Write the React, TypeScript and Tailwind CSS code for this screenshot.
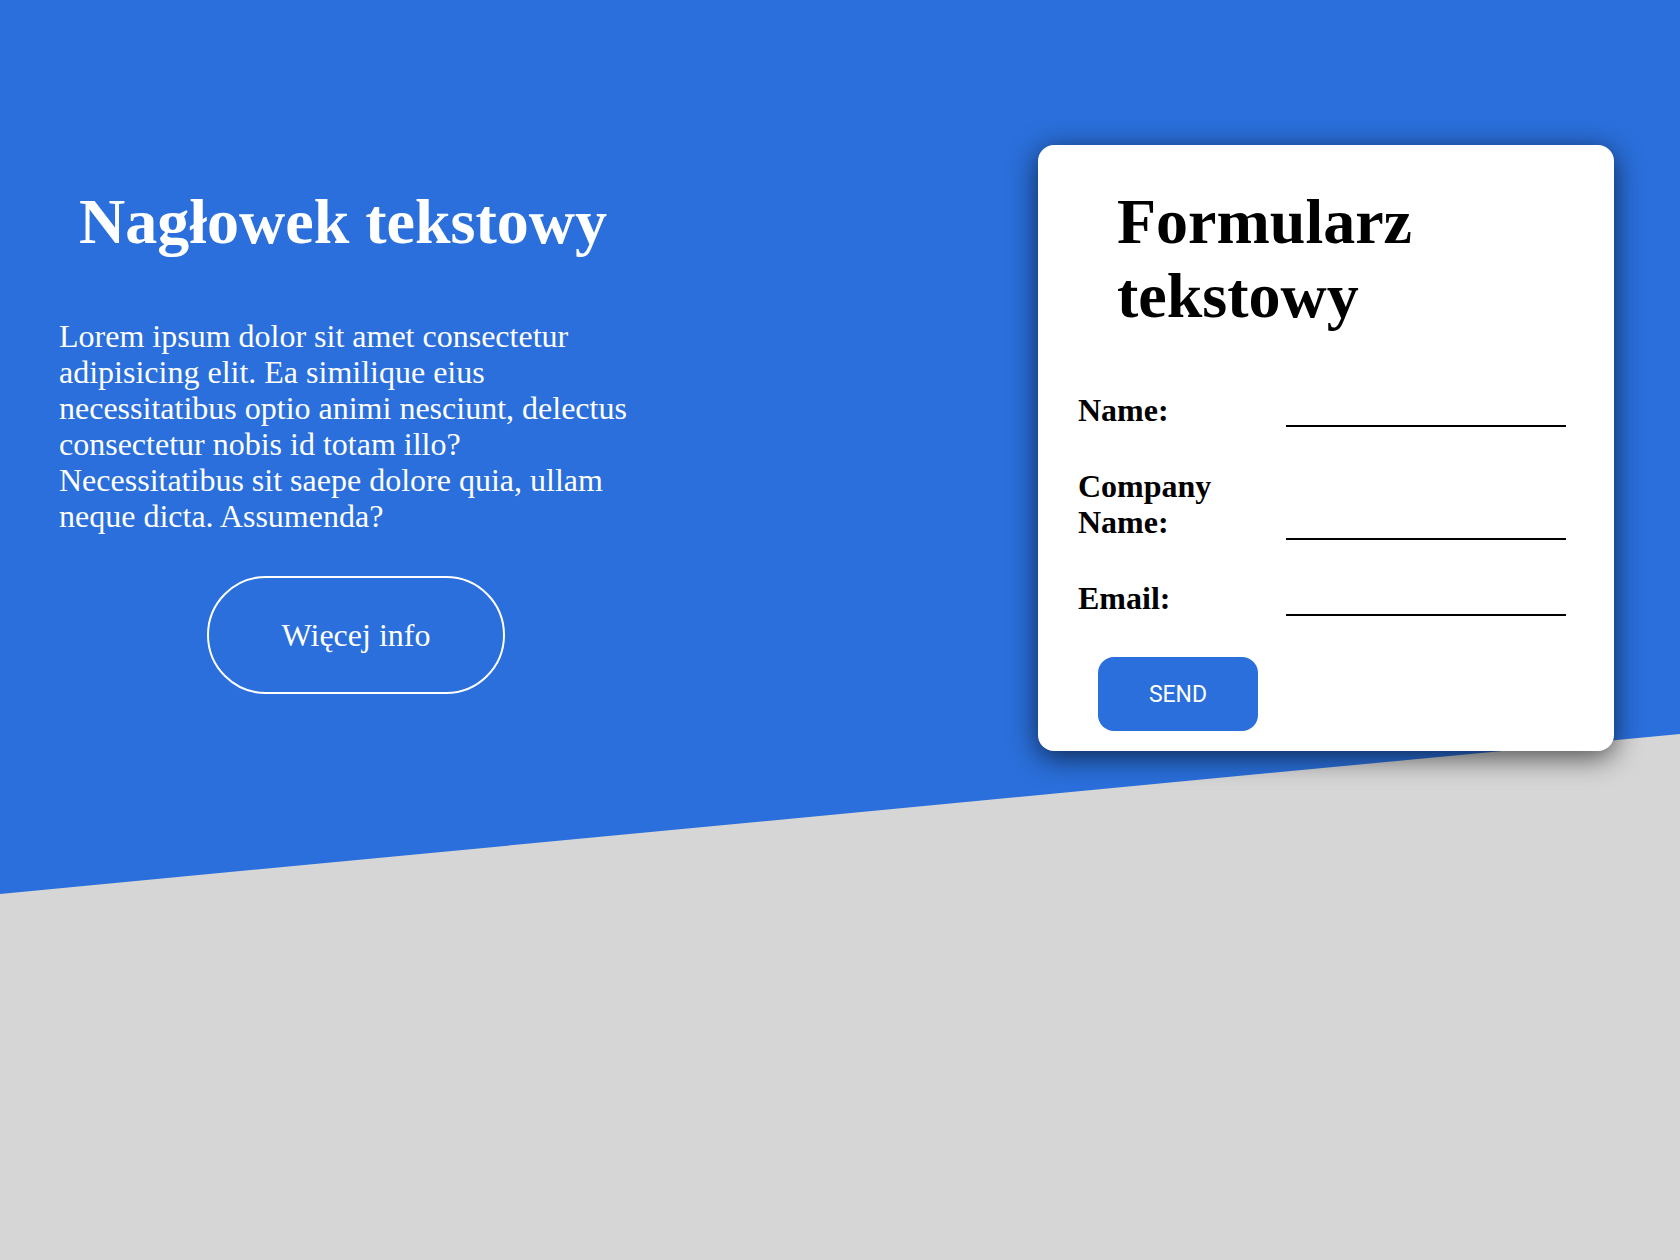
import React from "react";

export default function App() {
  return (
    <div className="relative w-full min-h-[1260px] bg-[#d6d6d6] font-['Liberation_Serif',serif] overflow-hidden">
      <div className="absolute inset-0 bg-[#2a6fdb] [clip-path:polygon(0_0,100%_0,100%_734px,0_894px)]" />
      <div className="relative flex items-start pt-[145px]">
        <div className="ml-[59px] mt-[40px] w-[580px] text-white">
          <h1 className="pl-[20px] text-[64px] font-bold leading-[73.5px]">Nagłowek tekstowy</h1>
          <p className="mt-[59px] text-[32px] leading-[36px]">
            Lorem ipsum dolor sit amet consectetur adipisicing elit. Ea similique eius necessitatibus optio animi nesciunt, delectus consectetur nobis id totam illo? Necessitatibus sit saepe dolore quia, ullam neque dicta. Assumenda?
          </p>
          <button className="mt-[42px] ml-[148px] flex h-[118px] w-[298px] items-center justify-center rounded-full border-2 border-white text-[32px] text-white">
            Więcej info
          </button>
        </div>
        <div className="ml-auto mr-[66px] w-[576px] rounded-[16px] bg-white pl-[40px] pr-[48px] pt-[40px] pb-[20px] shadow-[0_6px_28px_rgba(0,0,0,0.65)]">
          <h2 className="ml-[39px] text-[64px] font-bold leading-[73.5px] text-black">Formularz tekstowy</h2>
          <form className="mt-[59px] flex flex-col gap-[40px]" onSubmit={(e) => e.preventDefault()}>
            <div className="flex items-end">
              <label className="w-[208px] text-[32px] font-bold leading-[36px] text-black">Name:</label>
              <input className="mb-[1px] h-[36px] w-[280px] border-0 border-b-2 border-black bg-transparent outline-none" />
            </div>
            <div className="flex items-end">
              <label className="w-[208px] text-[32px] font-bold leading-[36px] text-black">
                Company
                <br />
                Name:
              </label>
              <input className="h-[36px] w-[280px] border-0 border-b-2 border-black bg-transparent outline-none" />
            </div>
            <div className="flex items-end">
              <label className="w-[208px] text-[32px] font-bold leading-[36px] text-black">Email:</label>
              <input className="h-[36px] w-[280px] border-0 border-b-2 border-black bg-transparent outline-none" />
            </div>
          </form>
          <button className="mt-[41px] ml-[20px] flex h-[74px] w-[160px] items-center justify-center rounded-[16px] bg-[#2a6fdb] pt-[3px] font-['Roboto',sans-serif] text-[23px] text-white">
            SEND
          </button>
        </div>
      </div>
    </div>
  );
}
